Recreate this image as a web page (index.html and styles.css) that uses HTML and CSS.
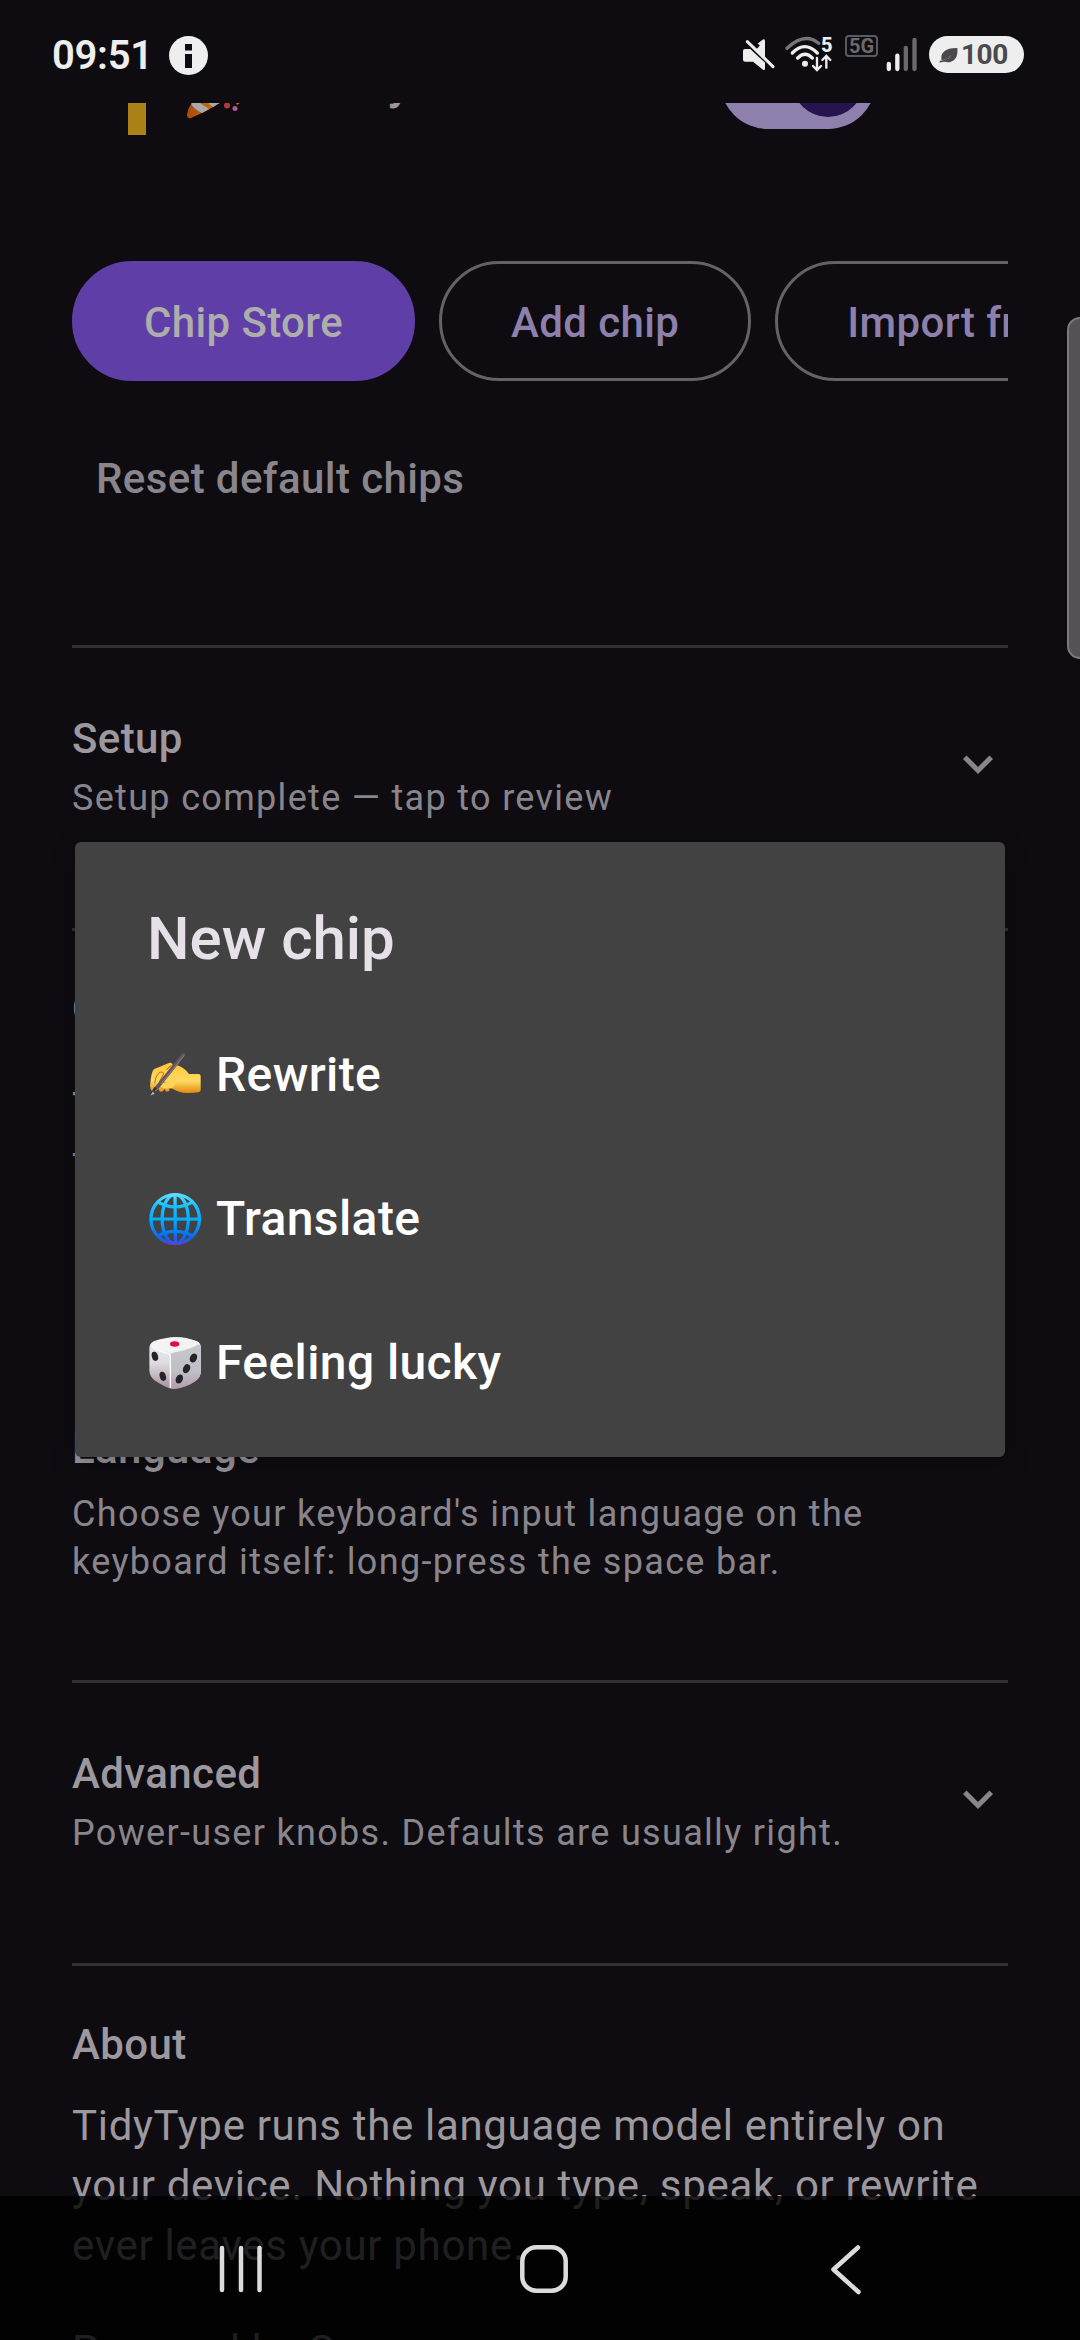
FILE: index.html
```html
<!DOCTYPE html>
<html lang="en">
<head>
<meta charset="utf-8">
<title>TidyType settings</title>
<link rel="stylesheet" href="styles.css">
</head>
<body>
<div class="screen">
  <header class="status">
    <span class="clock">09:51</span>
    <svg class="info" width="39" height="39" viewBox="0 0 39 39"><circle cx="19.5" cy="19.5" r="19.5" fill="#eee"/><path d="M16 8h7v6.500h-7zM16 18h7v14h-7z" fill="#0e0c10"/></svg>
    <div class="indicators">
      <svg width="34" height="40" viewBox="124 105 102 120"><path d="M133 147h16l39-29q5 0 5 4v85q0 4-5 3l-31-25h-24q-6 0-6-6v-26q0-6 6-6z" fill="#eee"/><path d="M134 127l84 78" stroke="#0e0c10" stroke-width="9"/><path d="M147 118l26 24" stroke="#0e0c10" stroke-width="14"/><path d="M140 125l77 75" stroke="#eee" stroke-width="9" stroke-linecap="round"/></svg>
      <div class="wifi">
        <svg width="48" height="40" viewBox="253 105 144 120" fill="none" stroke-linecap="round"><path d="M259 145q53-50 95-15" stroke="#777578" stroke-width="10"/><path d="M275 159q37-38 75 0M291 174q22-22 44 0" stroke="#eee" stroke-width="10"/><circle cx="313" cy="191" r="9" fill="#eee"/><path d="M349 174v34M337 198l12 12 12-12M377 203v-34M365 180l12-12 12 12" stroke="#eee" stroke-width="7"/></svg>
        <span class="wifi-gen">5</span>
      </div>
      <span class="net">5G</span>
      <svg width="32" height="40" viewBox="559 105 96 120" stroke-width="13" stroke-linecap="round"><path d="M567.500 192v15M593 167v40" stroke="#eee"/><path d="M618.500 144v63M644.500 120v87" stroke="#6b696c"/></svg>
      <div class="battery"><svg width="19" height="16" viewBox="716 138 57 48"><path d="M771 141c2 22-4 38-21 42-12 2-20-2-23-2 10-2 21-10 24-18-10 9-20 14-27 15-5-18 6-38 47-37z" fill="#4b494c"/><path d="M718 182q14 1 29-17" fill="none" stroke="#4b494c" stroke-width="5"/></svg><span>100</span></div>
    </div>
  </header>

  <main class="content">
    <div class="chip-row">
      <i class="handle"></i>
      <svg class="popper" width="56" height="18" viewBox="0 0 56 18"><defs><linearGradient id="cone"><stop stop-color="#a84b08"/><stop offset="1" stop-color="#c97612"/></linearGradient></defs><path d="M6 0h28Q20 9 5 15q-4 1-4-3Q2 5 6 0z" fill="url(#cone)"/><path d="M6 0h8l9 6-7 4Q9 7 5 1zM22 0h11l-6 4z" fill="#a9a9b0"/><circle cx="41" cy="2.500" r="3" fill="#b33b36"/><circle cx="49" cy="5.500" r="2.500" fill="#b257a0"/><path d="M50 0h4l-3 2z" fill="#b56b13"/></svg>
      <span class="chip-name">y</span>
      <div class="switch"><i></i></div>
    </div>
    <div class="actions">
      <button class="btn filled">Chip Store</button>
      <button class="btn">Add chip</button>
      <button class="btn">Import from</button>
    </div>
    <button class="reset">Reset default chips</button>

    <section class="section row setup">
      <div><h2>Setup</h2><p>Setup complete — tap to review</p></div>
      <svg width="60" height="60" viewBox="0 0 24 24"><path fill="#89858d" d="M7.410 8.590L12 13.170l4.590-4.580L18 10l-6 6-6-6z"/></svg>
    </section>
    <section class="section covered">
      <h2>C</h2>
      <p class="body">T</p>
      <p>T</p>
    </section>
    <section class="language">
      <h2>Language</h2>
      <p>Choose your keyboard's input language on the<br>keyboard itself: long-press the space bar.</p>
    </section>
    <section class="section row">
      <div><h2>Advanced</h2><p>Power-user knobs. Defaults are usually right.</p></div>
      <svg width="60" height="60" viewBox="0 0 24 24"><path fill="#89858d" d="M7.410 8.590L12 13.170l4.590-4.580L18 10l-6 6-6-6z"/></svg>
    </section>
    <section class="section about">
      <h2>About</h2>
      <p class="body">TidyType runs the language model entirely on<br>your device. Nothing you type, speak, or rewrite<br>ever leaves your phone.</p>
      <p class="body powered">Powered by G</p>
    </section>
  </main>

  <i class="scrollbar"></i>

  <div class="dialog">
    <h1>New chip</h1>
    <ul>
      <li>
        <svg width="54.400" height="55" viewBox="430 84 158 165" preserveAspectRatio="none">
          <defs><linearGradient id="skin" x1="0" y1="0" x2="0" y2="1"><stop stop-color="#ffc83a"/><stop offset=".6" stop-color="#ffd95f"/><stop offset="1" stop-color="#e28a10"/></linearGradient></defs>
          <path d="M436 198q3-45 12-51 28-12 45-19 8-1 8 6l14 2q22 8 34 26h28q6 0 6 7v40q0 7-6 8-22 4-46 1-18-3-28-11-6-2-12-5l1 10q-7 5-11 1l-3-6-5 7q-7 3-10-1l-1-6-13 8q-12 1-13-17z" fill="url(#skin)"/>
          <path d="M449 190q5-28 15-33 12-3 11 6l-12 22M484 149l14-13M461 198l6-12 20 4q-9 12-26 8M492 206q-18-2-30-10" fill="none" stroke="#c4780d" stroke-width="3"/>
          <path d="M462 187q20 3 28-1l18-10q8 16-8 28-20 6-38-5z" fill="#ffd355"/>
          <path d="M533 104L455 204" stroke="#615461" stroke-width="11" stroke-linecap="round"/><path d="M535 106l-68 86" stroke="#89798a" stroke-width="3"/><path d="M452 203l-11 19" stroke="#343037" stroke-width="8"/><path d="M444 214l-7 13 12-6z" fill="#b9b3bb"/>
        </svg>
        <span>Rewrite</span>
      </li>
      <li>
        <svg width="54.400" height="55" viewBox="430 516 158 165" preserveAspectRatio="none">
          <defs><linearGradient id="globe" gradientUnits="userSpaceOnUse" x1="509" y1="519" x2="509" y2="675"><stop stop-color="#62dfff"/><stop offset=".25" stop-color="#19c0ff"/><stop offset=".55" stop-color="#00a9ff"/><stop offset=".85" stop-color="#0867f5"/><stop offset="1" stop-color="#6040cf"/></linearGradient></defs>
          <g fill="none" stroke="url(#globe)" stroke-width="9.500"><ellipse cx="509" cy="597" rx="70.500" ry="73.500"/><ellipse cx="509" cy="597" rx="38" ry="73"/><path d="M508.500 522l1 150M436 597l146 .500M456 545q53 32 106 0M456 649q53-30 106 0"/></g>
        </svg>
        <span>Translate</span>
      </li>
      <li>
        <svg width="54.400" height="55" viewBox="430 948 158 165" preserveAspectRatio="none">
          <defs><linearGradient id="dieL" x1="0" y1="0" x2="0" y2="1"><stop stop-color="#eeedef"/><stop offset=".5" stop-color="#dddce0"/><stop offset="1" stop-color="#a6919f"/></linearGradient><linearGradient id="dieR" x1="0" y1="0" x2="0" y2="1"><stop stop-color="#c4c8cc"/><stop offset=".6" stop-color="#bfbfc6"/><stop offset="1" stop-color="#b59bad"/></linearGradient></defs>
          <path d="M434 985q0-15 14-22 34-11 63-12 30 0 61 13 12 5 12 21v69q-1 18-15 28-26 20-64 25-18 0-54-25-16-11-17-30z" fill="url(#dieL)"/>
          <path d="M495 1010q0-9 12-13 35-5 65-22 12-3 12 10v69q-1 18-15 28-26 20-64 25-8 0-9-4z" fill="url(#dieR)"/>
          <path d="M437 974q8-10 34-16 38-9 66-3 38 7 42 15-10 13-72 27-10 3-14 1-48-10-56-24z" fill="#f3f3f4"/>
          <path d="M440 979q14 13 50 22 5 4 5 12v91" fill="none" stroke="#faf9fb" stroke-width="4"/>
          <ellipse cx="507.500" cy="972" rx="13.500" ry="8" fill="#df0c46"/>
          <g fill="#242428"><ellipse cx="450" cy="1009" rx="9" ry="14" transform="rotate(-15 450 1009)"/><ellipse cx="473" cy="1069" rx="9" ry="14" transform="rotate(-15 473 1069)"/><ellipse cx="562" cy="1014" rx="10" ry="14" transform="rotate(25 562 1014)"/><ellipse cx="542" cy="1046" rx="10" ry="14" transform="rotate(25 542 1046)"/><ellipse cx="521" cy="1077" rx="10" ry="14" transform="rotate(25 521 1077)"/></g>
        </svg>
        <span>Feeling lucky</span>
      </li>
    </ul>
  </div>

  <nav class="navbar">
    <svg width="56" height="56" viewBox="0 0 56 56"><path d="M9 7v42M28 7v42M46.500 7v42"/></svg>
    <svg width="56" height="56" viewBox="0 0 56 56"><rect x="6.300" y="6.300" width="43.400" height="43.400" rx="14"/></svg>
    <svg width="56" height="56" viewBox="0 0 56 56"><path d="M40 6.500L15.500 28.500 40.500 51"/></svg>
  </nav>
</div>
</body>
</html>
```
FILE: styles.css
```css
* { box-sizing: border-box; margin: 0; padding: 0; }
body { background: #0e0c10; font-family: Roboto, sans-serif; }
button { background: none; border: 0; font: inherit; color: inherit; }
svg { display: block; flex: none; }

.screen { position: relative; width: 1080px; height: 2340px; overflow: hidden; background: #0e0c10; }

/* status bar */
.status { display: flex; align-items: flex-start; height: 103px; padding: 0 56px 0 52px; color: #eee; }
.clock { width: 117px; padding-top: 32px; font-size: 40px; line-height: 48px; font-weight: 600; letter-spacing: -.3px; }
.info { margin-top: 36px; }
.indicators { display: flex; margin-left: auto; padding-top: 35px; }
.wifi { display: flex; position: relative; margin-left: 9px; }
.wifi-gen { position: absolute; left: 36px; top: 0; font-size: 20px; line-height: 20px; font-weight: 800; }
.net { width: 33px; height: 22px; margin-left: 12px; border: 2px solid #5b595d; border-radius: 4px; color: #6b696c; font-size: 20px; line-height: 19px; font-weight: 700; text-align: center; }
.net + svg { margin-left: 8px; }
.battery { display: flex; align-items: center; width: 95px; height: 37px; margin: 1px 0 0 11px; padding-left: 10px; gap: 3px; border-radius: 19px; background: #eee; color: #4b494c; font-size: 28px; font-weight: 700; letter-spacing: -.5px; }

/* page content */
.content { height: 2237px; padding: 0 72px; overflow: hidden; color: #9c989e; }
.chip-row { display: flex; height: 32px; padding-left: 56px; overflow: hidden; }
.handle { width: 18px; height: 32px; background: #ac8218; }
.popper { margin-left: 40px; }
.chip-name { width: 24px; margin: -49px 0 0 145px; font-size: 48px; line-height: 56px; font-weight: 500; text-align: right; color: #9c989e; }
.switch { display: flex; align-items: center; justify-content: flex-end; width: 156px; height: 96px; margin: -70px 0 0 309px; padding-right: 12px; border-radius: 48px; background: #8d80ad; }
.switch i { width: 72px; height: 72px; border-radius: 50%; background: #26144e; }

.actions { display: flex; gap: 24px; margin-top: 126px; overflow: hidden; }
.btn { flex: none; height: 120px; padding: 3px 69px 0; border: 3px solid #646168; border-radius: 60px; color: #8d80ad; font-size: 42px; line-height: 60px; font-weight: 500; letter-spacing: .38px; white-space: nowrap; }
.filled { border-color: #5f3fa7; background: #5f3fa7; color: #adadad; }
.reset { display: block; margin: 68px 0 136px 24px; color: #89858d; font-size: 42px; line-height: 60px; font-weight: 500; letter-spacing: .4px; }

h2 { font-size: 42px; line-height: 60px; font-weight: 500; letter-spacing: .4px; }
p { color: #89858d; font-size: 36px; line-height: 48px; letter-spacing: 1.32px; white-space: nowrap; }
p.body { color: #9c989e; font-size: 42px; line-height: 60px; letter-spacing: .68px; }
.section { border-top: 3px solid #322f36; }
.row { display: flex; justify-content: space-between; align-items: flex-start; height: 283px; padding-top: 61px; }
.row p { margin-top: 5px; }
.row svg { margin-top: 25px; }
.covered { padding-top: 48px; height: 491px; }
.covered .body { margin-top: 39px; }
.covered .body + p { margin-top: 5px; }
.language { height: 261px; }
.language p { margin-top: 11px; }
.about { padding-top: 49px; }
.about .body { margin-top: 21px; }
.about .powered { margin-top: 45px; }

.scrollbar { position: absolute; left: 1067px; top: 317px; width: 26px; height: 342px; border: 2px solid #7c7a7d; border-radius: 13px; background: #545254; }

/* dialog */
.dialog { position: absolute; left: 75px; top: 842px; width: 930px; height: 615px; padding-top: 61px; border-radius: 6px; background: #424242; box-shadow: 0 8px 24px rgba(0, 0, 0, .25); }
.dialog h1 { padding-left: 72px; color: #e6e0e9; font-size: 60px; line-height: 72px; font-weight: 500; }
.dialog ul { margin-top: 28px; list-style: none; }
.dialog li { display: flex; align-items: center; height: 144px; padding-left: 73px; gap: 13.6px; color: #fff; font-size: 48px; line-height: 56px; font-weight: 500; letter-spacing: .4px; }

/* system navigation */
.navbar { position: absolute; left: 0; top: 2196px; width: 1080px; height: 144px; display: flex; align-items: center; justify-content: space-between; padding: 1px 206px 0 213px; background: rgba(0, 0, 0, .8); }
.navbar svg { fill: none; stroke: #dcdcdc; stroke-width: 4.5px; stroke-linecap: round; stroke-linejoin: round; }
```
